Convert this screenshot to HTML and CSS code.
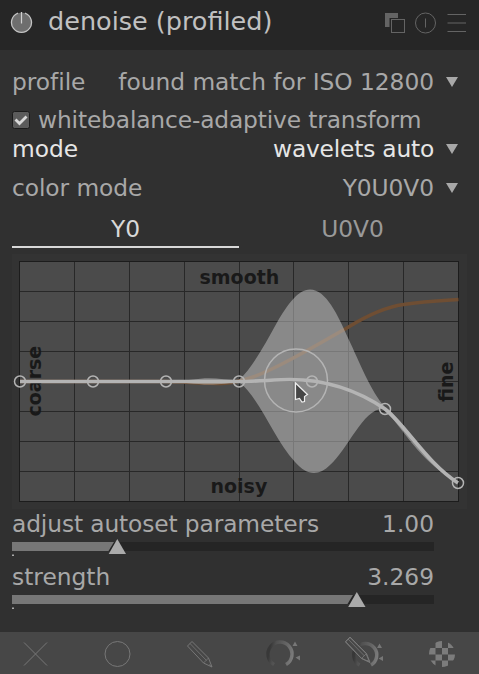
FILE: index.html
```html
<!DOCTYPE html>
<html lang="en">
<head>
<meta charset="utf-8">
<title>denoise (profiled)</title>
<link rel="stylesheet" href="styles.css">
</head>
<body>
<section class="module">
  <header class="header">
    <svg class="power" width="24" height="26" viewBox="10 9 24 26"><circle cx="21.5" cy="22.5" r="10" fill="#6e6e6e"/><path d="M18 13.1A10 10 0 1 0 25 13.1" fill="none" stroke="#c4c4c4" stroke-width="1.3"/><path d="M21.5 12V23.5" stroke="#d0d0d0" stroke-width="1.2"/></svg>
    <h1 class="title">denoise (profiled)</h1>
    <svg class="actions" width="84" height="24" viewBox="384 11 84 24" fill="none" stroke="#646464">
      <path d="M385 13H398V18H389.5V27H385Z" fill="#646464" stroke="none"/><rect x="391.5" y="19.500" width="13" height="13" fill="#262626"/>
      <circle cx="425.500" cy="23" r="10"/><path d="M425.500 18.500V27.500M447.500 14.500H466M447.500 23H466M447.500 31.500H466"/>
    </svg>
  </header>
  <main class="body">
    <div class="row profile"><span>profile</span><span class="value">found match for ISO 12800</span><i class="arrow"></i></div>
    <label class="row check"><svg width="18" height="18" viewBox="0 0 18 18"><rect x=".5" y=".5" width="17" height="17" rx="2" fill="#5b5b5b" stroke="#1b1b1b"/><path d="M3.500 8.500L7.500 12.500L14.500 5.500" fill="none" stroke="#d8d8d8" stroke-width="2.800"/></svg><span>whitebalance-adaptive transform</span></label>
    <div class="row mode"><span>mode</span><span class="value">wavelets auto</span><i class="arrow"></i></div>
    <div class="row color"><span>color mode</span><span class="value">Y0U0V0</span><i class="arrow"></i></div>
    <nav class="tabs"><span class="tab active">Y0</span><span class="tab">U0V0</span></nav>
    <svg class="graph" width="455" height="255" viewBox="12 254 455 255">
      <rect x="19.500" y="261.500" width="439" height="240" fill="#4b4b4b"/>
      <path d="M74.500 261V502M129.500 261V502M184.500 261V502M239.500 261V502M293.500 261V502M348.500 261V502M403.500 261V502M19 291.500H459M19 321.500H459M19 351.500H459M19 381.500H459M19 411.500H459M19 441.500H459M19 471.500H459" stroke="#282828" fill="none"/>
      <rect x="19.500" y="261.500" width="439" height="240" fill="none" stroke="#1c1c1c"/>
      <path d="M20 381.500H166C185 382 205 383.500 222 383.500C245 382 262 374 281 364.500C304 353 324 341 348.500 327C368 315 386 307 403.500 304.500C424 301 441 300.500 458.500 299.500" fill="none" stroke="#6f4e33" stroke-width="3.500"/>
      <g class="marks"><text x="199.500" y="284">smooth</text><text x="210.500" y="493">noisy</text><text transform="translate(41 416.500) rotate(-90)">coarse</text><text transform="translate(452.500 402) rotate(-90)">fine</text></g>
      <path d="M20 381.500H170C185 381 198 378.300 209 378.300C220 378.300 231 380.500 239 380C253 367 265 344 276.700 323C288 304 298 289.500 310 289.500C326 289.500 338 315 348.500 339C359 361 371 392 385 407C403 418 427 463 458 483C423 463 409 438 385 409C364 406 348 450 330 465C319 476 307 476 295 462C274 439 259 397 239 382C229 383 221 384.500 209 384.500C196 384.500 181 382 170 381.500Z" fill="#c8c8c8" fill-opacity=".5"/>
      <path d="M20 381.500H239C257 381.500 275 379.500 290 379.500C326 379.500 357 390 385 409C407 427 427 463 458 483" fill="none" stroke="#b4b4b4" stroke-width="3.600"/>
      <g fill="none" stroke="#b4b4b4" stroke-width="1.500"><circle cx="20" cy="381.500" r="5.500"/><circle cx="93" cy="381.500" r="5.500"/><circle cx="166" cy="381.500" r="5.500"/><circle cx="239" cy="381.500" r="5.500"/><circle cx="312" cy="381.500" r="5.500"/><circle cx="385" cy="409" r="5.500"/><circle cx="458" cy="483" r="5.500"/><circle cx="296" cy="380.500" r="31.500"/></g>
      <path d="M295.500 383V399.500L299.500 398.500L302 402L304.500 401.500V396.500L307.500 394.500Z" fill="#464646" stroke="#eee" stroke-width="1.200"/>
    </svg>
    <div class="row slider adjust"><span>adjust autoset parameters</span><span class="value">1.00</span></div>
    <svg class="bar" width="430" height="20" viewBox="12 538 430 20"><path d="M12 542H434V551H12Z" fill="#252525"/><path d="M12 542H114L108.500 551H12Z" fill="#777"/><path d="M117.300 539L126 554H108.700Z" fill="#aaa"/><path d="M12 554.500h2v1.500h-2z" fill="#aaa"/></svg>
    <div class="row slider strength"><span>strength</span><span class="value">3.269</span></div>
    <svg class="bar" width="430" height="20" viewBox="12 538 430 20"><path d="M12 542H434V551H12Z" fill="#252525"/><path d="M12 542H353L347.500 551H12Z" fill="#777"/><path d="M356.800 539L365.500 554H348.200Z" fill="#aaa"/><path d="M12 554.500h2v1.500h-2z" fill="#aaa"/></svg>
  </main>
  <footer class="footer">
    <svg width="479" height="42" viewBox="0 632 479 42" fill="none" stroke="#777" stroke-width="1">
      <path d="M24 642.500L47 665.500M47 642.500L24 665.500"/><circle cx="117.500" cy="654" r="12.500"/>
      <defs>
        <g id="pencil"><path d="M187.500 646L192 641.500L208.500 658L212 667L203.500 663Z"/><path d="M190 643.500L206.500 660.500M203.500 663L208.500 658M209 664.500L212 667" stroke-width=".8"/></g>
        <linearGradient id="fade" x1="0" y1=".7" x2="1" y2=".9"><stop stop-color="#383838"/><stop offset=".2" stop-color="#505050"/><stop offset=".6" stop-color="#646464"/><stop offset="1" stop-color="#7c7c7c"/></linearGradient>
        <clipPath id="disc"><circle cx="442" cy="654" r="13"/></clipPath>
      </defs>
      <use href="#pencil"/>
      <path d="M274 664.500A12 12 0 1 1 286 664.500" stroke="url(#fade)" stroke-width="3.500"/>
      <path d="M295 641.500L297.500 646H292.500ZM295.500 657.500L300 655.500V660.500Z" fill="#777" stroke="none"/>
      <path d="M359.500 665A11.500 11.500 0 1 1 371 665" stroke="url(#fade)" stroke-width="3.500"/>
      <path d="M345.500 642L350 637.500L366 653.500L369.500 662L361 658Z" fill="#474747"/><use href="#pencil" transform="translate(158 -4.500)"/>
      <path d="M379.500 643.500L382 648H377ZM378.500 658.500L383 656V661Z" fill="#777" stroke="none"/>
      <path clip-path="url(#disc)" d="M435.500 641h6.500v7h-6.500zM448 641h7v7h-7zM429 648h6.500v6.500H429zM442 648h6v6.500h-6zM435.500 654.500h6.500v6h-6.500zM448 654.500h7v6h-7zM429 660.500h6.500v6.500H429zM442 660.500h6v6.500h-6z" fill="#7c7c7c" stroke="none"/>
    </svg>
  </footer>
</section>
</body>
</html>
```
FILE: styles.css
```css
* { box-sizing: border-box; }
body { margin: 0; background: #303030; color: #a8a8a8; font: 23.33px/28px "DejaVu Sans", sans-serif; }
svg { display: block; flex: none; }
.module { width: 479px; height: 674px; display: flex; flex-direction: column; overflow: hidden; }
.header { height: 50px; background: #262626; display: flex; padding: 0 11px 0 10px; }
.power { margin-top: 9px; }
.title { flex: 1; margin: 6px 0 0 14px; font-size: 25.5px; line-height: 30px; font-weight: 400; color: #c1c1c1; white-space: nowrap; }
.actions { margin-top: 11px; }
.body { flex: 1; padding: 18px 12px 0; }
.row { height: 28px; display: flex; align-items: center; white-space: nowrap; }
.value { margin-left: auto; }
.arrow { width: 12px; height: 10px; margin: 0 9px 0 12px; background: #a8a8a8; clip-path: polygon(0 0, 100% 0, 50% 100%); }
.profile { letter-spacing: -.04px; }
.check { margin-top: 10px; gap: 8px; letter-spacing: -.15px; }
.mode { margin-top: 1px; color: #e6e6e6; }
.mode .value { letter-spacing: -.2px; }
.color { margin-top: 11px; letter-spacing: -.08px; }
.tabs { height: 43px; margin-top: 3px; display: flex; }
.tab { width: 227px; padding-top: 7px; height: 43px; line-height: 34px; text-align: center; color: #999; }
.active { color: #d8d8d8; border-bottom: 2px solid #d8d8d8; }
.graph { margin-top: 6px; background: #333; }
.marks { font: bold 19px "DejaVu Sans", sans-serif; fill: #191919; }
.slider { margin-top: 1px; padding-right: 33px; }
.adjust span:first-child { letter-spacing: -.12px; }
.strength { margin-top: 5px; }
.footer { height: 42px; background: #474747; }
```
